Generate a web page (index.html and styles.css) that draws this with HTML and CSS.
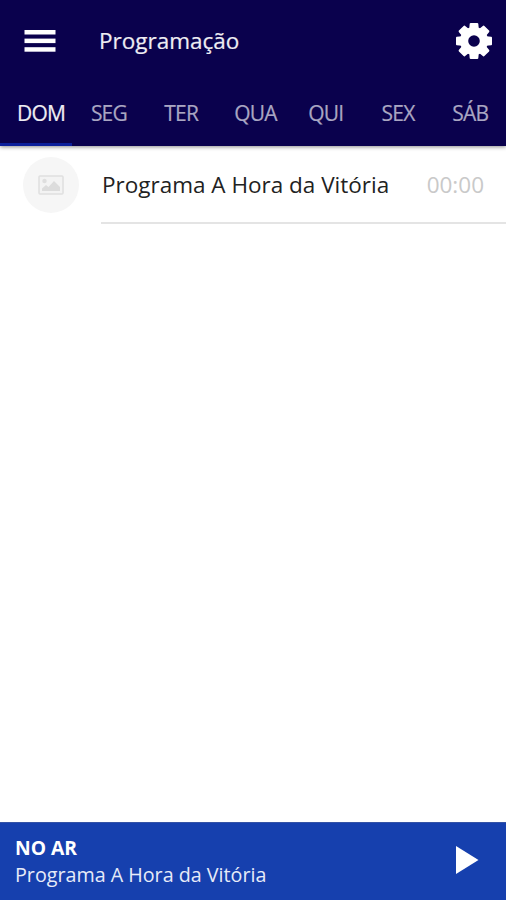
FILE: index.html
```html
<!doctype html>
<html lang="pt-BR">
  <head>
    <meta charset="UTF-8" />
    <meta name="viewport" content="width=device-width, initial-scale=1.0" />
    <title>Programação</title>
    <link rel="stylesheet" href="styles.css">
  </head>
  <body>
    <header class="header">
      <div class="toolbar">
        <svg class="menu-icon" width="32" height="22" viewBox="0 0 32 22" fill="#fff">
          <rect x="0.5" y="0" width="31" height="4.5" />
          <rect x="0.5" y="8.6" width="31" height="4.5" />
          <rect x="0.5" y="17.2" width="31" height="4.5" />
        </svg>
        <h1 class="title">Programação</h1>
        <svg class="settings-icon" width="36" height="36" viewBox="-18 -18 36 36" fill="#fff">
          <circle r="9.9" fill="none" stroke="#fff" stroke-width="8.2" />
          <path id="tooth" d="M-4.8-12 -4.3-17.2Q-4.1-18-3.3-18H3.3Q4.1-18 4.3-17.2L4.8-12Z" />
          <use href="#tooth" transform="rotate(45)" />
          <use href="#tooth" transform="rotate(90)" />
          <use href="#tooth" transform="rotate(135)" />
          <use href="#tooth" transform="rotate(180)" />
          <use href="#tooth" transform="rotate(225)" />
          <use href="#tooth" transform="rotate(270)" />
          <use href="#tooth" transform="rotate(315)" />
        </svg>
      </div>
      <nav class="tabs">
        <a class="tab active">DOM</a>
        <a class="tab">SEG</a>
        <a class="tab">TER</a>
        <a class="tab wide">QUA</a>
        <a class="tab">QUI</a>
        <a class="tab">SEX</a>
        <a class="tab">SÁB</a>
      </nav>
    </header>

    <main class="list">
      <div class="item">
        <div class="avatar">
          <svg width="26" height="20" viewBox="0 0 26 20">
            <rect x="1" y="1" width="24" height="18" rx="1" fill="#f3f3f3" stroke="#e0e0e0" stroke-width="1.6" />
            <circle cx="6.5" cy="6" r="2.2" fill="#dedede" />
            <path d="M4 16V13.5L8 10 10.5 12 16 6 22 12V16Z" fill="#dcdcdc" />
          </svg>
        </div>
        <div class="item-body">
          <span class="item-name">Programa A Hora da Vitória</span>
          <span class="item-time">00:00</span>
        </div>
      </div>
    </main>

    <footer class="player">
      <div class="player-info">
        <strong class="player-label">NO AR</strong>
        <span class="player-name">Programa A Hora da Vitória</span>
      </div>
      <svg class="play-icon" width="24" height="30" viewBox="0 0 24 30">
        <path d="M1 1 23.5 15 1 29Z" fill="#fff" />
      </svg>
    </footer>
  </body>
</html>
```
FILE: styles.css
```css
* {
  box-sizing: border-box;
}
body {
  margin: 0;
  height: 100vh;
  display: flex;
  flex-direction: column;
  font-family: "Open Sans", sans-serif;
  background-color: #fff;
  overflow: hidden;
}
.header {
  height: 146px;
  background-color: #0a014d;
  color: #fff;
  box-shadow: 0 1px 4px rgba(0, 0, 0, 0.45);
}
.toolbar {
  display: flex;
  align-items: center;
  height: 82px;
  padding: 0 14px 0 24px;
}
.title {
  flex: 1;
  margin: 0 0 0 43px;
  padding-bottom: 1px;
  font-size: 22.5px;
  font-weight: 500;
  -webkit-text-stroke: 0.2px;
  color: #eeedf3;
}
.tabs {
  display: grid;
  grid-template-columns: repeat(7, 1fr);
  height: 64px;
}
.tab {
  height: 64px;
  padding-left: 1px;
  line-height: 62px;
  text-align: center;
  font-size: 21px;
  letter-spacing: -0.8px;
  -webkit-text-stroke: 0.2px;
  color: #a9a6c2;
}
.tab.active {
  padding-left: 10px;
  border-bottom: 3px solid #0c1f9b;
  font-weight: 500;
  color: #eeedf3;
}
.tab.wide {
  padding-left: 5px;
}
.list {
  flex: 1;
}
.item {
  display: flex;
  height: 78px;
  padding-left: 23px;
}
.avatar {
  display: flex;
  align-items: center;
  justify-content: center;
  width: 56px;
  height: 56px;
  margin-top: 11px;
  border-radius: 50%;
  background-color: #f6f6f6;
}
.item-body {
  flex: 1;
  display: flex;
  align-items: center;
  justify-content: space-between;
  margin-left: 22px;
  padding-right: 22px;
  border-bottom: 2px solid #e4e4e4;
  font-size: 22.5px;
}
.item-name {
  padding-left: 1px;
  color: #222;
}
.item-time {
  color: #c9c9c9;
}
.player {
  display: flex;
  align-items: center;
  justify-content: space-between;
  height: 78px;
  padding: 0 27px 3px 15px;
  background-color: #1640ae;
  border-top: 1px solid #3453a6;
  color: #fff;
}
.player-info {
  display: flex;
  flex-direction: column;
  padding-top: 2px;
  font-size: 19.7px;
  line-height: 27px;
}
.player-label {
  font-size: 19.3px;
}
.player-name {
  color: #e6ebf8;
}
```
